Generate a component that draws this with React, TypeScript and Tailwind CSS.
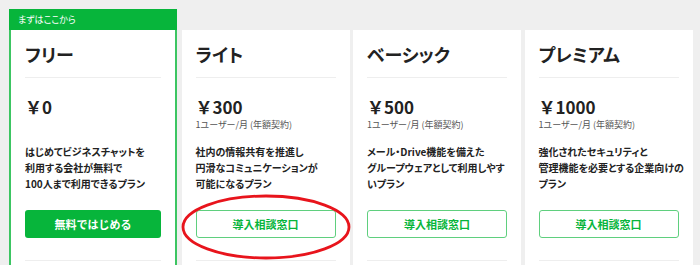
import React from 'react';

type Plan = {
  name: string;
  price: string;
  unit?: string;
  desc: string[];
  cta: string;
  primary?: boolean;
};

const plans: Plan[] = [
  {
    name: 'フリー',
    price: '￥0',
    desc: ['はじめてビジネスチャットを', '利用する会社が無料で', '100人まで利用できるプラン'],
    cta: '無料ではじめる',
    primary: true,
  },
  {
    name: 'ライト',
    price: '￥300',
    unit: '1ユーザー/月 (年額契約)',
    desc: ['社内の情報共有を推進し', '円滑なコミュニケーションが', '可能になるプラン'],
    cta: '導入相談窓口',
  },
  {
    name: 'ベーシック',
    price: '￥500',
    unit: '1ユーザー/月 (年額契約)',
    desc: ['メール・Drive機能を備えた', 'グループウェアとして利用しやす', 'いプラン'],
    cta: '導入相談窓口',
  },
  {
    name: 'プレミアム',
    price: '￥1000',
    unit: '1ユーザー/月 (年額契約)',
    desc: ['強化されたセキュリティと', '管理機能を必要とする企業向けの', 'プラン'],
    cta: '導入相談窓口',
  },
];

function PlanBody({ plan }: { plan: Plan }) {
  return (
    <div className="px-[14px] pt-[12px]">
      <div className="text-[18px] leading-[24px] font-bold text-[#222] [font-feature-settings:'palt']">
        {plan.name}
      </div>
      <div className="mt-[11px] h-px bg-[#eeeeee]" />
      <div className="mt-[18px] text-[17px] leading-[22px] font-bold text-[#222]">{plan.price}</div>
      <div className="h-[14px] text-[9px] leading-[14px] text-[#555] whitespace-nowrap [font-feature-settings:'palt']">
        {plan.unit ?? ''}
      </div>
      <div className="mt-[12px] text-[10px] leading-[16px] font-bold text-[#222] [font-feature-settings:'palt']">
        {plan.desc.map((line, i) => (
          <div key={i} className="whitespace-nowrap">
            {line}
          </div>
        ))}
      </div>
      {plan.primary ? (
        <div className="mt-[18px] h-[28px] rounded-[3px] bg-[#07b53b] flex items-center justify-center text-[11px] font-bold text-white">
          {plan.cta}
        </div>
      ) : (
        <div className="mt-[18px] h-[28px] rounded-[3px] border border-[#5fcf7e] bg-white flex items-center justify-center text-[11px] font-bold text-[#07b53b]">
          {plan.cta}
        </div>
      )}
      <div className="mt-[22px] h-px bg-[#eeeeee]" />
      <div className="h-[20px]" />
    </div>
  );
}

export default function App() {
  return (
    <div
      className="relative w-[700px] h-[265px] overflow-hidden bg-[#efefef]"
      style={{ fontFamily: '"Noto Sans CJK JP", "Noto Sans", sans-serif' }}
    >
      <div className="flex pl-[9px] pt-[9px] gap-[3.5px]">
        {/* free plan with header */}
        <div className="w-[168px] shrink-0 mr-[1px]">
          <div className="h-[21px] bg-[#07b53b] flex items-center pl-[9px] text-[9px] text-white [font-feature-settings:'palt']">
            まずはここから
          </div>
          <div className="bg-white border-x-2 border-[#3cc562]">
            <PlanBody plan={plans[0]} />
          </div>
        </div>
        {plans.slice(1).map((p) => (
          <div key={p.name} className="w-[168px] shrink-0 mt-[21px] bg-white">
            <PlanBody plan={p} />
          </div>
        ))}
      </div>

      {/* red annotation ellipse */}
      <svg className="absolute left-[180px] top-[193px]" width="172" height="68" viewBox="0 0 172 68">
        <ellipse cx="86" cy="34" rx="83" ry="31" fill="none" stroke="#e8141c" strokeWidth="2.8" />
      </svg>
    </div>
  );
}
